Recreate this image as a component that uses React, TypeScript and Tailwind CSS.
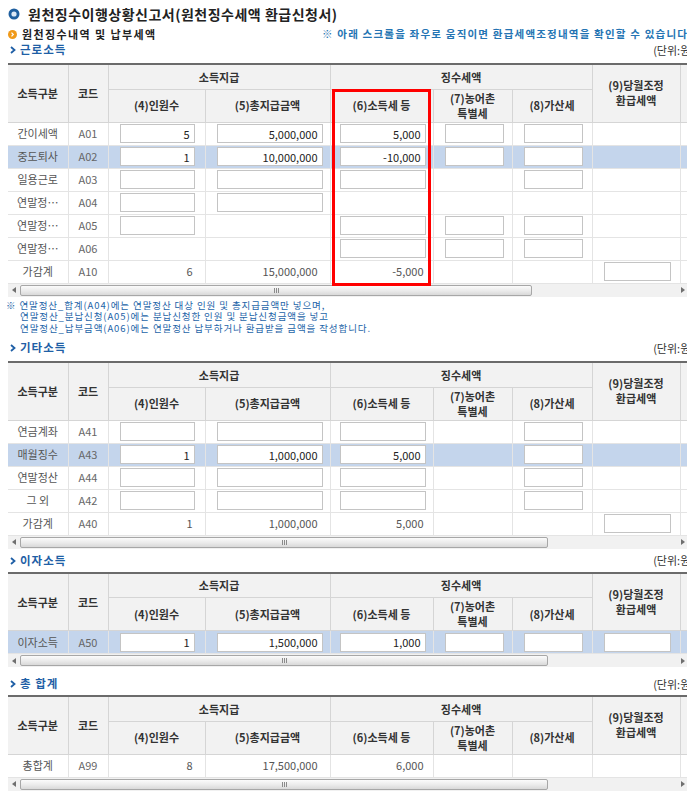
import React from "react";

// 원천징수이행상황신고서 - 소득별 원천징수내역 표

type Cell = { t: "in" | "tx"; v: string } | null;

type Row = {
  label: string;
  code: string;
  hl?: boolean;
  cells: Cell[]; // (4) ~ (9)
};

const inp = (v = ""): Cell => ({ t: "in", v });
const txt = (v: string): Cell => ({ t: "tx", v });

const INPUT_CLS = [
  "ml-[11px] w-[75px]",
  "ml-[11px] w-[106px]",
  "ml-[9px] w-[86px]",
  "ml-[11px] w-[59px]",
  "ml-[11px] w-[59px]",
  "ml-[11px] w-[67px]",
];

const TEXT_PAD = ["pr-[12px]", "pr-[12px]", "pr-[9px]", "pr-[9px]", "pr-[9px]", "pr-[9px]"];

const earned: Row[] = [
  { label: "간이세액", code: "A01", cells: [inp("5"), inp("5,000,000"), inp("5,000"), inp(), inp(), null] },
  { label: "중도퇴사", code: "A02", hl: true, cells: [inp("1"), inp("10,000,000"), inp("-10,000"), inp(), inp(), null] },
  { label: "일용근로", code: "A03", cells: [inp(), inp(), inp(), null, inp(), null] },
  { label: "연말정…", code: "A04", cells: [inp(), inp(), null, null, null, null] },
  { label: "연말정…", code: "A05", cells: [inp(), null, inp(), inp(), inp(), null] },
  { label: "연말정…", code: "A06", cells: [null, null, inp(), inp(), inp(), null] },
  { label: "가감계", code: "A10", cells: [txt("6"), txt("15,000,000"), txt("-5,000"), null, null, inp()] },
];

const other: Row[] = [
  { label: "연금계좌", code: "A41", cells: [inp(), inp(), inp(), null, inp(), null] },
  { label: "매월징수", code: "A43", hl: true, cells: [inp("1"), inp("1,000,000"), inp("5,000"), null, inp(), null] },
  { label: "연말정산", code: "A44", cells: [inp(), inp(), inp(), null, inp(), null] },
  { label: "그 외", code: "A42", cells: [inp(), inp(), inp(), null, inp(), null] },
  { label: "가감계", code: "A40", cells: [txt("1"), txt("1,000,000"), txt("5,000"), null, null, inp()] },
];

const interest: Row[] = [
  { label: "이자소득", code: "A50", hl: true, cells: [inp("1"), inp("1,500,000"), inp("1,000"), inp(), inp(), inp()] },
];

const total: Row[] = [
  { label: "총합계", code: "A99", cells: [txt("8"), txt("17,500,000"), txt("6,000"), null, null, null] },
];

function Chevron() {
  return (
    <svg width="6" height="8" viewBox="0 0 6 8" className="shrink-0">
      <path d="M1 1 L4.5 4 L1 7" fill="none" stroke="#1f5fa6" strokeWidth="1.8" />
    </svg>
  );
}

function SectionTitle({ title }: { title: string }) {
  return (
    <div className="flex h-[14px] w-[686px] items-center justify-between">
      <div className="flex items-center gap-[4px] pl-[2px] text-[11.5px] font-bold leading-none tracking-[1px] text-[#1f5fa6]">
        <Chevron />
        <span>{title}</span>
      </div>
      <span className="text-[11px] leading-none text-[#333]">(단위:원)</span>
    </div>
  );
}

function Scrollbar({ thumb }: { thumb: string }) {
  return (
    <div className="flex h-[13px] w-[680px] items-center bg-[#f1f1f1]">
      <div className="flex w-[12px] justify-center">
        <svg width="4" height="6" viewBox="0 0 4 6">
          <path d="M4 0 L0 3 L4 6 Z" fill="#6f6f6f" />
        </svg>
      </div>
      <div
        className={`flex h-[11px] items-center justify-center gap-[1px] rounded-[2px] border border-[#a7a7a7] bg-gradient-to-b from-[#fbfbfb] via-[#ececec] to-[#d9d9d9] ${thumb}`}
      >
        <span className="h-[5px] w-[1px] bg-[#8a8a8a]" />
        <span className="h-[5px] w-[1px] bg-[#8a8a8a]" />
        <span className="h-[5px] w-[1px] bg-[#8a8a8a]" />
      </div>
      <div className="flex-1" />
      <div className="flex w-[10px] justify-center">
        <svg width="4" height="6" viewBox="0 0 4 6">
          <path d="M0 0 L4 3 L0 6 Z" fill="#6f6f6f" />
        </svg>
      </div>
    </div>
  );
}

function IncomeTable({ rows, thumb }: { rows: Row[]; thumb: string }) {
  const th = "border-b border-r border-[#d5d5d5] font-bold text-[#333] text-[11px] text-center align-middle";
  const td = "h-[23px] border-b border-r border-[#e4e4e4] p-0 text-[11px] align-middle";
  return (
    <div>
      <div className="w-[680px] overflow-hidden">
        <table className="w-[772px] table-fixed border-collapse border-t-2 border-[#6b6b6b]">
          <colgroup>
            <col className="w-[60px]" />
            <col className="w-[40px]" />
            <col className="w-[97px]" />
            <col className="w-[125px]" />
            <col className="w-[103px]" />
            <col className="w-[79px]" />
            <col className="w-[80px]" />
            <col className="w-[88px]" />
            <col className="w-[100px]" />
          </colgroup>
          <thead className="bg-[#f2f2f2]">
            <tr className="h-[25px]">
              <th rowSpan={2} className={th}>소득구분</th>
              <th rowSpan={2} className={th}>코드</th>
              <th colSpan={2} className={th}>소득지급</th>
              <th colSpan={3} className={th}>징수세액</th>
              <th rowSpan={2} className={`${th} leading-[15px]`}>
                (9)당월조정
                <br />
                환급세액
              </th>
              <th rowSpan={2} className={th}></th>
            </tr>
            <tr className="h-[33px]">
              <th className={th}>(4)인원수</th>
              <th className={th}>(5)총지급금액</th>
              <th className={th}>(6)소득세 등</th>
              <th className={`${th} leading-[15px]`}>
                (7)농어촌
                <br />
                특별세
              </th>
              <th className={th}>(8)가산세</th>
            </tr>
          </thead>
          <tbody>
            {rows.map((r) => (
              <tr key={r.code} className={r.hl ? "bg-[#c4d5ec]" : "bg-white"}>
                <td className={`${td} text-center text-[#555]`}>{r.label}</td>
                <td className={`${td} text-center text-[#666]`}>{r.code}</td>
                {r.cells.map((c, i) => (
                  <td key={i} className={`${td} ${c && c.t === "tx" ? `text-right text-[#555] ${TEXT_PAD[i]}` : ""}`}>
                    {c && c.t === "in" && (
                      <input
                        readOnly
                        value={c.v}
                        className={`block h-[19px] border border-[#c4c4c4] bg-white pr-[4px] text-right text-[11px] text-[#222] outline-none ${INPUT_CLS[i]}`}
                      />
                    )}
                    {c && c.t === "tx" && c.v}
                  </td>
                ))}
                <td className={td}></td>
              </tr>
            ))}
          </tbody>
        </table>
      </div>
      <Scrollbar thumb={thumb} />
    </div>
  );
}

export default function App() {
  return (
    <div className="relative h-[803px] w-[687px] overflow-hidden bg-white font-['Noto_Sans_CJK_KR',sans-serif] text-[#333]">
      <div className="flex w-[700px] flex-col pl-[8px]">
        {/* 제목 */}
        <div className="flex h-[27px] items-center gap-[8px]">
          <svg width="12" height="12" viewBox="0 0 12 12" className="shrink-0">
            <circle cx="6" cy="6" r="5.5" fill="#1f5f9f" />
            <circle cx="6" cy="6" r="2.6" fill="#dce9f6" />
          </svg>
          <h1 className="text-[14px] font-bold leading-none tracking-[0.5px] text-[#222]">
            원천징수이행상황신고서(원천징수세액 환급신청서)
          </h1>
        </div>

        <div className="flex h-[14px] items-center">
          <div className="flex w-[314px] items-center gap-[5px]">
            <svg width="9" height="9" viewBox="0 0 9 9" className="shrink-0">
              <circle cx="4.5" cy="4.5" r="4.5" fill="#f09a1a" />
              <path d="M3.5 2.6 L5.3 4.5 L3.5 6.4" fill="none" stroke="#fff" strokeWidth="1.2" />
            </svg>
            <span className="text-[11px] font-bold leading-none tracking-[1.4px] text-[#222]">원천징수내역 및 납부세액</span>
          </div>
          <span className="whitespace-nowrap text-[10.5px] font-bold leading-none tracking-[1.2px] text-[#2474b3]">
            ※ 아래 스크롤을 좌우로 움직이면 환급세액조정내역을 확인할 수 있습니다
          </span>
        </div>

        <div className="mt-[2px]">
          <SectionTitle title="근로소득" />
        </div>
        <div className="mt-[6px]">
          <IncomeTable rows={earned} thumb="w-[512px]" />
        </div>

        <div className="mt-[3px] text-[9.5px] leading-[11.5px] tracking-[0.9px] text-[#1d64a8]">
          <p className="-ml-[2px]">※ 연말정산_합계(A04)에는 연말정산 대상 인원 및 총지급금액만 넣으며,</p>
          <p className="pl-[12px]">연말정산_분납신청(A05)에는 분납신청한 인원 및 분납신청금액을 넣고</p>
          <p className="pl-[12px]">연말정산_납부금액(A06)에는 연말정산 납부하거나 환급받을 금액을 작성합니다.</p>
        </div>

        <div className="mt-[7px]">
          <SectionTitle title="기타소득" />
        </div>
        <div className="mt-[6px]">
          <IncomeTable rows={other} thumb="w-[528px]" />
        </div>

        <div className="mt-[5px]">
          <SectionTitle title="이자소득" />
        </div>
        <div className="mt-[4px]">
          <IncomeTable rows={interest} thumb="w-[528px]" />
        </div>

        <div className="mt-[10px]">
          <SectionTitle title="총 합계" />
        </div>
        <div className="mt-[4px]">
          <IncomeTable rows={total} thumb="w-[528px]" />
        </div>
      </div>

      {/* 강조 표시 */}
      <div className="pointer-events-none absolute left-[332px] top-[89px] h-[197px] w-[99px] border-[3px] border-[#ff0000]" />
    </div>
  );
}
